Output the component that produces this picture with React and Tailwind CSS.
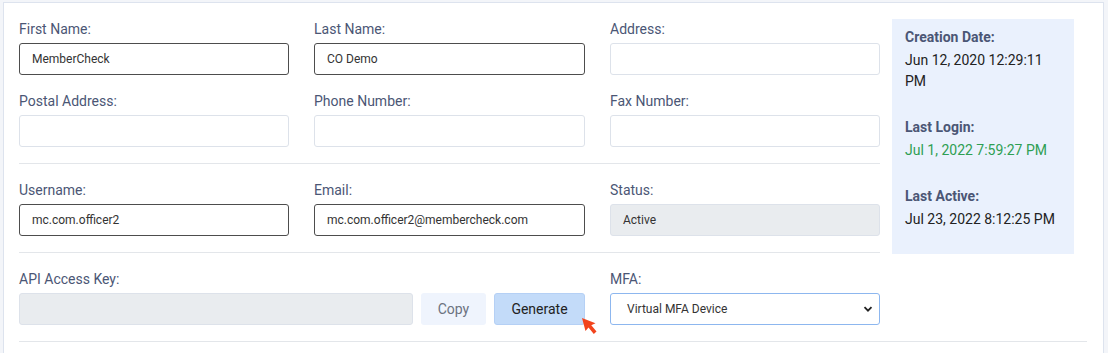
import React from "react";

const font = { fontFamily: "Roboto, 'Liberation Sans', sans-serif" };

function Field({ label, value, variant = "light", className = "" }) {
  const box =
    variant === "dark"
      ? "border-[#4d4d4d] bg-white"
      : variant === "disabled"
      ? "border-[#dde2ea] bg-[#e9ecef]"
      : "border-[#dde2ea] bg-white";
  return (
    <div className={"mt-[18px] " + className}>
      <div className="h-[16px] leading-[16px] text-[14px] text-[#4b5675] mb-[6px]">{label}</div>
      <div className={"h-[32px] rounded-[3px] border flex items-center pl-[12px] text-[12px] text-[#333]" + " " + box}>
        {value}
      </div>
    </div>
  );
}

function Info({ title, children, valueClass = "text-[#222]", last }) {
  return (
    <div className={last ? "" : "mb-[25px]"}>
      <div className="text-[14px] leading-[21px] font-bold text-[#4b5675] mb-[2px] whitespace-nowrap">{title}</div>
      <div className={"text-[14px] leading-[21px] whitespace-nowrap " + valueClass}>{children}</div>
    </div>
  );
}

export default function App() {
  return (
    <div className="w-[1108px] h-[353px] overflow-hidden bg-[#f3f5f9] pt-[2px] pl-[3px]" style={font}>
      <div className="w-[1101px] h-[400px] bg-white border-t border-l border-r border-[#dde3ee] pl-[15px] pr-[16px] pt-[16px]">
        <div className="flex">
          <div className="w-[861px]">
            <div className="grid grid-cols-[270px_271px_270px] gap-x-[25px] mt-[-16px]">
              <Field label="First Name:" value="MemberCheck" variant="dark" />
              <Field label="Last Name:" value="CO Demo" variant="dark" />
              <Field label="Address:" value="" />
              <Field label="Postal Address:" value="" />
              <Field label="Phone Number:" value="" />
              <Field label="Fax Number:" value="" />
            </div>
            <div className="h-px bg-[#e3e6ea] mt-[16px]" />
            <div className="grid grid-cols-[270px_271px_270px] gap-x-[25px]">
              <Field label="Username:" value="mc.com.officer2" variant="dark" />
              <Field label="Email:" value="mc.com.officer2@membercheck.com" variant="dark" />
              <Field label="Status:" value="Active" variant="disabled" />
            </div>
            <div className="h-px bg-[#e3e6ea] mt-[16px]" />
            <div className="grid grid-cols-[566px_270px] gap-x-[25px]">
              <div className="mt-[18px]">
                <div className="h-[16px] leading-[16px] text-[14px] text-[#4b5675] mb-[6px]">API Access Key:</div>
                <div className="flex">
                  <div className="w-[394px] shrink-0 h-[32px] rounded-[3px] border border-[#dde2ea] bg-[#e9ecef]" />
                  <div className="ml-[8px] w-[65px] shrink-0 h-[32px] rounded-[3px] bg-[#eff4fd] text-[#6b7280] text-[14px] flex items-center justify-center">
                    Copy
                  </div>
                  <div className="relative ml-[8px] w-[91px] shrink-0 h-[32px] rounded-[3px] bg-[#c3dbf9] border border-[#b5d0f5] text-[#222] text-[14px] flex items-center justify-center">
                    Generate
                    <svg className="absolute left-[86px] top-[23px]" width="18" height="19" viewBox="0 0 18 19">
                      <path d="M1 1 L4.5 14 L7.5 10.5 L12.8 17 L15.5 14.6 L10.3 8.3 L14.5 6.3 Z" fill="#f2441d" />
                    </svg>
                  </div>
                </div>
              </div>
              <div className="mt-[18px]">
                <div className="h-[16px] leading-[16px] text-[14px] text-[#4b5675] mb-[6px]">MFA:</div>
                <div className="h-[32px] rounded-[3px] border border-[#8db7ef] bg-white flex items-center pl-[16px] pr-[6px] text-[12px] text-[#333]">
                  <span className="flex-1">Virtual MFA Device</span>
                  <svg width="10" height="10" viewBox="0 0 10 10">
                    <path d="M1.5 3.2 L5 6.7 L8.5 3.2" fill="none" stroke="#222" strokeWidth="1.8" />
                  </svg>
                </div>
              </div>
            </div>
          </div>
          <div className="ml-[12px] w-[182px] h-[235px] bg-[#eaf1fd] pl-[13px] pt-[8px]">
            <Info title="Creation Date:">
              Jun 12, 2020 12:29:11
              <br />
              PM
            </Info>
            <Info title="Last Login:" valueClass="text-[#2e9f53]">
              Jul 1, 2022 7:59:27 PM
            </Info>
            <Info title="Last Active:" last>
              Jul 23, 2022 8:12:25 PM
            </Info>
          </div>
        </div>
        <div className="h-px bg-[#e3e6ea] mt-[16px]" />
      </div>
    </div>
  );
}
